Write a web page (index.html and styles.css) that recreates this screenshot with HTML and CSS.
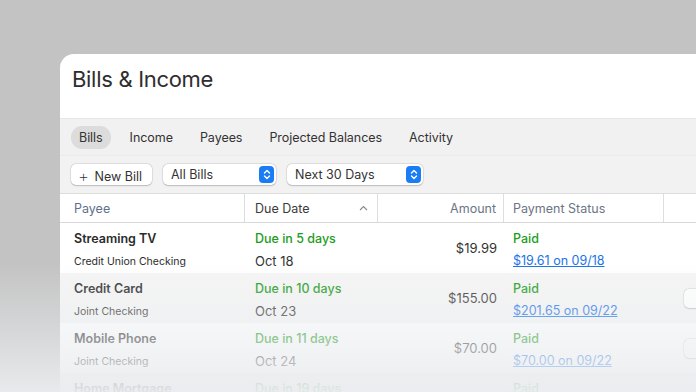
FILE: index.html
```html
<!DOCTYPE html>
<html lang="en">
<head>
    <meta charset="UTF-8">
    <title>Bills &amp; Income</title>
    <link rel="stylesheet" href="styles.css">
</head>
<body>

    <div class="window">
        <div class="titlebar">
            <h1>Bills &amp; Income</h1>
        </div>

        <!-- sekmeler -->
        <div class="tabs">
            <span class="tab active">Bills</span>
            <span class="tab">Income</span>
            <span class="tab">Payees</span>
            <span class="tab">Projected Balances</span>
            <span class="tab">Activity</span>
        </div>

        <div class="toolbar">
            <button class="btn new-bill"><span class="plus">+</span> New Bill</button>
            <div class="select bills-select">
                <span>All Bills</span>
                <span class="stepper">
                    <svg width="8" height="11" viewBox="0 0 8 11"><path d="M1.5 4 L4 1.5 L6.5 4 M1.5 7 L4 9.5 L6.5 7" fill="none" stroke="#fff" stroke-width="1.4" stroke-linecap="round" stroke-linejoin="round"/></svg>
                </span>
            </div>
            <div class="select days-select">
                <span>Next 30 Days</span>
                <span class="stepper">
                    <svg width="8" height="11" viewBox="0 0 8 11"><path d="M1.5 4 L4 1.5 L6.5 4 M1.5 7 L4 9.5 L6.5 7" fill="none" stroke="#fff" stroke-width="1.4" stroke-linecap="round" stroke-linejoin="round"/></svg>
                </span>
            </div>
        </div>

        <!-- tablo -->
        <div class="table">
            <div class="row head">
                <div class="cell payee">Payee</div>
                <div class="cell due sorted">Due Date
                    <svg class="sort" width="9" height="6" viewBox="0 0 9 6"><path d="M1 5 L4.5 1.5 L8 5" fill="none" stroke="#8a8a8a" stroke-width="1.1"/></svg>
                </div>
                <div class="cell amount">Amount</div>
                <div class="cell status">Payment Status</div>
                <div class="cell extra"></div>
            </div>

            <div class="row">
                <div class="cell payee">
                    <div class="name">Streaming TV</div>
                    <div class="account">Credit Union Checking</div>
                </div>
                <div class="cell due">
                    <div class="green">Due in 5 days</div>
                    <div class="date">Oct 18</div>
                </div>
                <div class="cell amount">$19.99</div>
                <div class="cell status">
                    <div class="green">Paid</div>
                    <a class="link">$19.61 on 09/18</a>
                </div>
                <div class="cell extra"></div>
            </div>

            <div class="row alt">
                <div class="cell payee">
                    <div class="name">Credit Card</div>
                    <div class="account">Joint Checking</div>
                </div>
                <div class="cell due">
                    <div class="green">Due in 10 days</div>
                    <div class="date">Oct 23</div>
                </div>
                <div class="cell amount">$155.00</div>
                <div class="cell status">
                    <div class="green">Paid</div>
                    <a class="link">$201.65 on 09/22</a>
                </div>
                <div class="cell extra"><span class="mini-btn"></span></div>
            </div>

            <div class="row">
                <div class="cell payee">
                    <div class="name">Mobile Phone</div>
                    <div class="account">Joint Checking</div>
                </div>
                <div class="cell due">
                    <div class="green">Due in 11 days</div>
                    <div class="date">Oct 24</div>
                </div>
                <div class="cell amount">$70.00</div>
                <div class="cell status">
                    <div class="green">Paid</div>
                    <a class="link">$70.00 on 09/22</a>
                </div>
                <div class="cell extra"><span class="mini-btn"></span></div>
            </div>

            <div class="row alt">
                <div class="cell payee">
                    <div class="name">Home Mortgage</div>
                </div>
                <div class="cell due">
                    <div class="green">Due in 19 days</div>
                </div>
                <div class="cell amount"></div>
                <div class="cell status">
                    <div class="green">Paid</div>
                </div>
                <div class="cell extra"></div>
            </div>
        </div>
    </div>

    <!-- alt kısım solma efekti -->
    <div class="fade"></div>

</body>
</html>
```

FILE: styles.css
```css
* {
    margin: 0;
    padding: 0;
    box-sizing: border-box;
}

body {
    font-family: 'Inter', 'Noto Sans', sans-serif;
    background-color: #c3c3c3;
    width: 696px;
    height: 392px;
    overflow: hidden;
    position: relative;
    padding: 54px 0 0 60px;
}

.window {
    width: 680px;
    background-color: #fff;
    border-radius: 14px 0 0 0;
    overflow: hidden;
}

.titlebar {
    height: 64px;
    padding: 12px 0 0 12px;
}

h1 {
    font-size: 22px;
    font-weight: 400;
    color: #2e2e2e;
    letter-spacing: -0.3px;
}

.tabs {
    display: flex;
    align-items: center;
    gap: 4px;
    height: 38px;
    padding-left: 11px;
    background-color: #f1f1f1;
    border-top: 1px solid #e8e8e8;
    border-bottom: 1px solid #ebebeb;
}

.tab {
    font-size: 12.5px;
    color: #333;
    padding: 4px 8px;
    margin-right: 7px;
    border-radius: 11px;
    letter-spacing: -0.05px;
}

.tab.active {
    background-color: #dcdcdc;
}

.toolbar {
    display: flex;
    align-items: center;
    gap: 11px;
    height: 38px;
    padding-left: 11px;
    background-color: #f2f2f2;
    border-bottom: 1px solid #dcdcdc;
}

.btn, .select {
    height: 21px;
    background-color: #fff;
    border-radius: 5px;
    box-shadow: 0 0 0 0.5px rgba(0, 0, 0, 0.12), 0 0.5px 1.5px rgba(0, 0, 0, 0.18);
    font-family: inherit;
    font-size: 12.5px;
    color: #333;
    border: none;
}

.btn {
    width: 81px;
    padding-left: 7px;
    text-align: left;
}

.plus {
    font-size: 17px;
    font-weight: 200;
    margin-right: 2px;
    position: relative;
    top: 1px;
}

.select {
    display: flex;
    align-items: center;
    justify-content: space-between;
    padding: 0 2px 0 8px;
}

.bills-select {
    width: 113px;
}

.days-select {
    width: 136px;
}

.stepper {
    display: flex;
    align-items: center;
    justify-content: center;
    width: 15px;
    height: 17px;
    border-radius: 4px;
    background-color: #1a7df5;
}

.table {
    font-size: 12.5px;
}

.row {
    display: flex;
    height: 50px;
}

.row.alt {
    background-color: #f5f5f5;
}

.row.head {
    height: 29px;
    border-bottom: 1px solid #d9d9d9;
    align-items: stretch;
}

.head .cell {
    display: flex;
    align-items: center;
    color: #6b7485;
    font-size: 12.5px;
    border-right: 1px solid #dedede;
}

.head .payee {
    color: #5f708a;
}

.head .due.sorted {
    color: #3a3a3a;
    justify-content: space-between;
    padding-right: 9px;
}

.head .amount {
    justify-content: flex-end;
}

.cell {
    padding-top: 7px;
}

.payee {
    width: 185px;
    padding-left: 14px;
}

.due {
    width: 133px;
    padding-left: 10px;
}

.amount {
    width: 126px;
    padding-right: 7px;
    text-align: right;
}

.status {
    width: 160px;
    padding-left: 9px;
}

.extra {
    flex: 1;
    padding-left: 20px;
}

.head .cell {
    padding-top: 0;
}

.head .extra {
    border-right: none;
}

.row:not(.head) .amount {
    display: flex;
    align-items: center;
    justify-content: flex-end;
    padding-top: 0;
    color: #333;
    font-size: 13px;
}

.name {
    font-weight: 600;
    color: #2b2b2b;
    font-size: 12.5px;
    line-height: 18px;
}

.account {
    font-size: 10.5px;
    color: #2b2b2b;
    margin-top: 7px;
    line-height: 14px;
}

.green {
    color: #229c1c;
    font-weight: 500;
    line-height: 18px;
}

.date {
    color: #333;
    font-size: 13px;
    margin-top: 5px;
    line-height: 16px;
}

.link {
    display: inline-block;
    color: #1a73e8;
    text-decoration: underline;
    margin-top: 5px;
    line-height: 16px;
    font-size: 12.5px;
}

.mini-btn {
    display: block;
    width: 20px;
    height: 19px;
    margin-top: 9px;
    background-color: #fff;
    border-radius: 5px;
    box-shadow: 0 0 0 0.5px rgba(0, 0, 0, 0.12), 0 0.5px 1.5px rgba(0, 0, 0, 0.18);
}

.fade {
    position: absolute;
    left: 0;
    right: 0;
    top: 0;
    bottom: 0;
    background: linear-gradient(to bottom,
        rgba(234, 236, 239, 0) 0px,
        rgba(234, 236, 239, 0) 262px,
        rgba(234, 236, 239, 0.55) 340px,
        rgba(234, 236, 239, 0.95) 392px);
    pointer-events: none;
}
```
